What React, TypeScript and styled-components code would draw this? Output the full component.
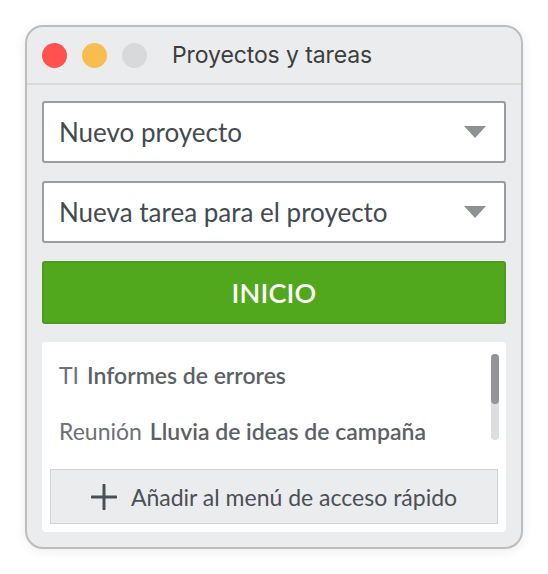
import React from 'react'
import styled, { createGlobalStyle } from 'styled-components'

const GlobalStyle = createGlobalStyle`
  html, body {
    margin: 0;
    background: #ffffff;
  }
  body {
    font-family: 'Lato', 'Noto Sans', sans-serif;
  }
`

const Window = styled.div`
  width: 498px;
  height: 524px;
  margin: 25px;
  box-sizing: border-box;
  border: solid 2px #bdbdbd;
  border-radius: 18px;
  background: #ebeced;
  box-shadow: 0 2px 12px rgba(0, 0, 0, 0.08);
  display: flex;
  flex-flow: column;
  overflow: hidden;
`

const TitleBar = styled.div`
  height: 56px;
  flex-shrink: 0;
  display: flex;
  align-items: center;
  padding-left: 15px;
  border-bottom: solid 2px #d9d9d9;
`

const Light = styled.span<{ $color: string }>`
  width: 25px;
  height: 25px;
  border-radius: 50%;
  background: ${p => p.$color};
  margin-right: 15px;
`

const Title = styled.div`
  margin-left: 10px;
  font-family: 'Inter', 'Roboto', sans-serif;
  font-size: 23px;
  color: #3d3d3d;
  letter-spacing: -0.1px;
`

const Body = styled.div`
  flex: 1;
  display: flex;
  flex-flow: column;
  gap: 18px;
  padding: 16px 15px 15px;
`

const Select = styled.div`
  height: 62px;
  box-sizing: border-box;
  border: solid 2px #9b9c9e;
  border-radius: 3px;
  background: #ffffff;
  display: flex;
  align-items: center;
  padding: 0 18px 0 15px;
  font-size: 26px;
  color: #434a51;
`

const SelectLabel = styled.span`
  flex: 1;
`

const Arrow = styled.span`
  width: 0;
  height: 0;
  border-left: 11px solid transparent;
  border-right: 11px solid transparent;
  border-top: 12px solid #8e9093;
`

const StartButton = styled.button`
  height: 63px;
  box-sizing: border-box;
  border: solid 2px #4d9a1f;
  border-radius: 3px;
  background: #52a81c;
  color: #ffffff;
  font-family: inherit;
  font-size: 27px;
  font-weight: 600;
  letter-spacing: 0.2px;
`

const ListPanel = styled.div`
  flex: 1;
  background: #ffffff;
  border-radius: 4px;
  display: flex;
  flex-flow: column;
  padding: 8px;
  position: relative;
`

const Rows = styled.div`
  flex: 1;
  display: flex;
  flex-flow: column;
  padding: 14px 0 0 9px;
  gap: 33px;
`

const Row = styled.div`
  font-size: 23px;
  line-height: 23px;
  color: #6c7075;
`

const Project = styled.span`
  margin-right: 8px;
`

const Task = styled.span`
  font-weight: 600;
  color: #5c6166;
`

const Track = styled.div`
  position: absolute;
  top: 12px;
  right: 7px;
  width: 8px;
  height: 86px;
  border-radius: 4px;
  background: #dcdddf;
`

const Thumb = styled.div`
  height: 50px;
  border-radius: 4px;
  background: #939598;
`

const AddButton = styled.button`
  height: 55px;
  box-sizing: border-box;
  border: solid 1px #d2d3d4;
  background: #ebeced;
  display: flex;
  align-items: center;
  justify-content: center;
  gap: 14px;
  font-family: inherit;
  font-size: 23px;
  color: #4b5056;
`

function PlusIcon() {
  return (
    <svg width="26" height="26" viewBox="0 0 26 26">
      <path d="M13 1v24M1 13h24" stroke="#4b5056" strokeWidth="3" strokeLinecap="round" />
    </svg>
  )
}

export default function App() {
  return (
    <>
      <GlobalStyle />
      <Window>
        <TitleBar>
          <Light $color="#fe5150" />
          <Light $color="#f6bd4f" />
          <Light $color="#d8d9da" />
          <Title>Proyectos y tareas</Title>
        </TitleBar>
        <Body>
          <Select>
            <SelectLabel>Nuevo proyecto</SelectLabel>
            <Arrow />
          </Select>
          <Select>
            <SelectLabel>Nueva tarea para el proyecto</SelectLabel>
            <Arrow />
          </Select>
          <StartButton>INICIO</StartButton>
          <ListPanel>
            <Rows>
              <Row>
                <Project>TI</Project>
                <Task>Informes de errores</Task>
              </Row>
              <Row>
                <Project>Reunión</Project>
                <Task>Lluvia de ideas de campaña</Task>
              </Row>
            </Rows>
            <Track>
              <Thumb />
            </Track>
            <AddButton>
              <PlusIcon />
              Añadir al menú de acceso rápido
            </AddButton>
          </ListPanel>
        </Body>
      </Window>
    </>
  )
}
